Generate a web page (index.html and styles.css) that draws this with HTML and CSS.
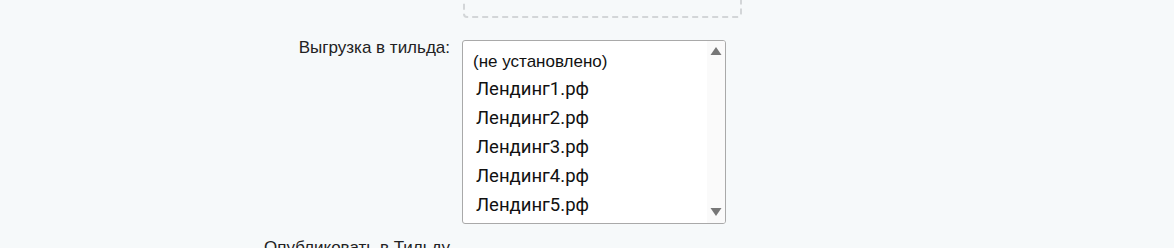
FILE: index.html
```html
<!DOCTYPE html>
<html lang="ru">
<head>
    <meta charset="UTF-8">
    <title>Выгрузка</title>
    <link rel="stylesheet" href="styles.css">
</head>
<body>
    <div class="page">
        <div class="form-row">
            <div class="form-label"></div>
            <div class="form-field">
                <div class="drop-zone"></div>
            </div>
        </div>

        <div class="form-row row-select">
            <label class="form-label">Выгрузка в тильда:</label>
            <div class="form-field">
                <div class="listbox">
                    <ul class="listbox-options">
                        <li class="empty">(не установлено)</li>
                        <li>Лендинг1.рф</li>
                        <li>Лендинг2.рф</li>
                        <li>Лендинг3.рф</li>
                        <li>Лендинг4.рф</li>
                        <li>Лендинг5.рф</li>
                    </ul>
                    <div class="scrollbar">
                        <svg width="12" height="10" viewBox="0 0 12 10"><path d="M6 1 L11.5 9 L0.5 9 Z" fill="#777"/></svg>
                        <svg width="12" height="10" viewBox="0 0 12 10"><path d="M0.5 1 L11.5 1 L6 9 Z" fill="#777"/></svg>
                    </div>
                </div>
            </div>
        </div>

        <div class="form-row row-next">
            <label class="form-label">Опубликовать в Тильду</label>
            <div class="form-field"></div>
        </div>
    </div>
</body>
</html>
```

FILE: styles.css
```css
body {
    margin: 0;
    background-color: #f6f9fa;
    font-family: "Liberation Sans", Arial, sans-serif;
    color: #222;
}
.page {
    display: flex;
    flex-direction: column;
    margin-top: -40px;
}
.form-row {
    display: flex;
    gap: 12px;
}
.row-select {
    margin-top: 22px;
}
.row-next {
    margin-top: 16px;
}
.form-label {
    width: 450px;
    text-align: right;
    font-size: 17px;
    margin-top: -2px;
}
.form-field {
    width: 280px;
}
.drop-zone {
    height: 54px;
    border: 2px dashed #d3d6d8;
    border-radius: 4px;
    margin-left: 1px;
}
.listbox {
    display: flex;
    width: 262px;
    height: 182px;
    background-color: #fff;
    border: 1px solid #a9a9a9;
    border-radius: 3px;
    overflow: hidden;
}
.listbox-options {
    list-style: none;
    margin: 0;
    padding: 7px 0 0 10px;
    flex: 1;
    font-family: Roboto, "Liberation Sans", sans-serif;
    font-size: 18.5px;
    color: #111;
}
.listbox-options li {
    height: 29px;
    line-height: 29px;
    padding-left: 3px;
}
.listbox-options li.empty {
    padding-left: 0;
    font-family: "Liberation Sans", Arial, sans-serif;
    font-size: 17px;
    height: 27px;
    line-height: 27px;
}
.scrollbar {
    width: 18px;
    background-color: #fafafa;
    display: flex;
    flex-direction: column;
    justify-content: space-between;
    align-items: center;
    padding: 5px 0 6px;
}
```
